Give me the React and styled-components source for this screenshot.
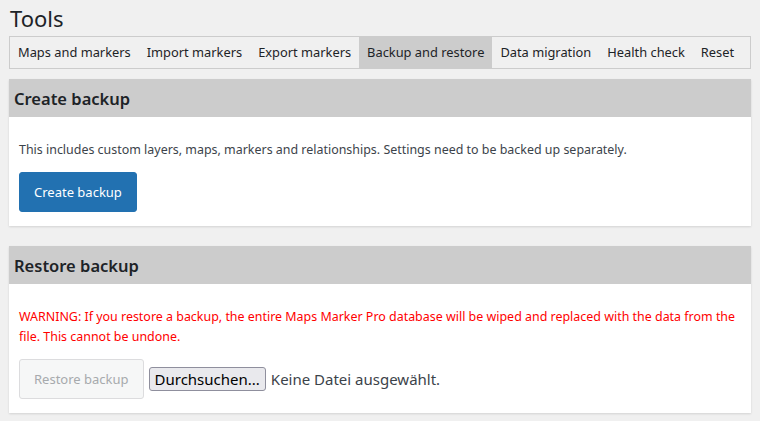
import React from 'react';
import styled, { createGlobalStyle } from 'styled-components';

const GlobalStyle = createGlobalStyle`
    body {
        margin: 0;
        background: #f0f0f0;
        font-family: "Noto Sans", "Open Sans", sans-serif;
        color: #3c434a;
    }
`

const Page = styled.div`
    padding: 0 9px;
`

const Title = styled.h1`
    margin: 0;
    padding: 4px 0 0 1px;
    height: 32px;
    font-size: 22px;
    font-weight: 400;
    color: #1d2327;
    line-height: 28px;
`

const TabBar = styled.nav`
    display: flex;
    border: 1px solid #ccc;
    height: 31px;
`

const Tab = styled.a`
    display: flex;
    align-items: center;
    flex-shrink: 0;
    white-space: nowrap;
    padding: 0 8px 1px;
    font-size: 12.85px;
    color: #1d2327;
    background: ${props => props.active ? '#ccc' : 'transparent'};
    cursor: pointer;
`

const Panel = styled.section`
    margin-top: 10px;
    margin-bottom: 20px;
    background: #fff;
    box-shadow: 0 1px 2px rgba(0, 0, 0, 0.12);
`

const PanelHeader = styled.h2`
    margin: 0;
    height: 38px;
    padding: 0 5px;
    display: flex;
    align-items: center;
    background: #ccc;
    font-size: 16.5px;
    font-weight: 600;
    color: #1d2327;
`

const PanelBody = styled.div`
    padding: 23px 10px 14px;
`

const Text = styled.p`
    margin: 0 0 12px;
    font-size: 12.45px;
    line-height: 20px;
    color: ${props => props.warning ? '#ff0000' : '#3c434a'};
`

const Row = styled.div`
    display: flex;
    align-items: center;
    gap: 5px;
`

const Button = styled.button`
    height: 40px;
    padding: 0 14px;
    border-radius: 3px;
    font-family: inherit;
    font-size: 13px;
    border: 1px solid ${props => props.disabled ? '#dcdcde' : '#2271b1'};
    background: ${props => props.disabled ? '#f6f7f7' : '#2271b1'};
    color: ${props => props.disabled ? '#a7aaad' : '#fff'};
`

const FileButton = styled.span`
    display: inline-flex;
    align-items: center;
    height: 22px;
    padding: 0 5px;
    border: 1px solid #8f8f9d;
    border-radius: 3px;
    background: #e9e9ed;
    color: #000;
    font-size: 15px;
`

const FileName = styled.span`
    font-size: 15px;
    color: #3c434a;
`

const tabs = ['Maps and markers', 'Import markers', 'Export markers', 'Backup and restore', 'Data migration', 'Health check', 'Reset'];

function App() {
    return (
        <Page>
            <GlobalStyle />
            <Title>Tools</Title>
            <TabBar>
                {tabs.map(t => (
                    <Tab key={t} active={t === 'Backup and restore'}>{t}</Tab>
                ))}
            </TabBar>
            <Panel>
                <PanelHeader>Create backup</PanelHeader>
                <PanelBody>
                    <Text>This includes custom layers, maps, markers and relationships. Settings need to be backed up separately.</Text>
                    <Button>Create backup</Button>
                </PanelBody>
            </Panel>
            <Panel>
                <PanelHeader>Restore backup</PanelHeader>
                <PanelBody>
                    <Text warning>WARNING: If you restore a backup, the entire Maps Marker Pro database will be wiped and replaced with the data from the file. This cannot be undone.</Text>
                    <Row>
                        <Button disabled>Restore backup</Button>
                        <FileButton>Durchsuchen...</FileButton>
                        <FileName>Keine Datei ausgewählt.</FileName>
                    </Row>
                </PanelBody>
            </Panel>
        </Page>
    )
}

export default App;
